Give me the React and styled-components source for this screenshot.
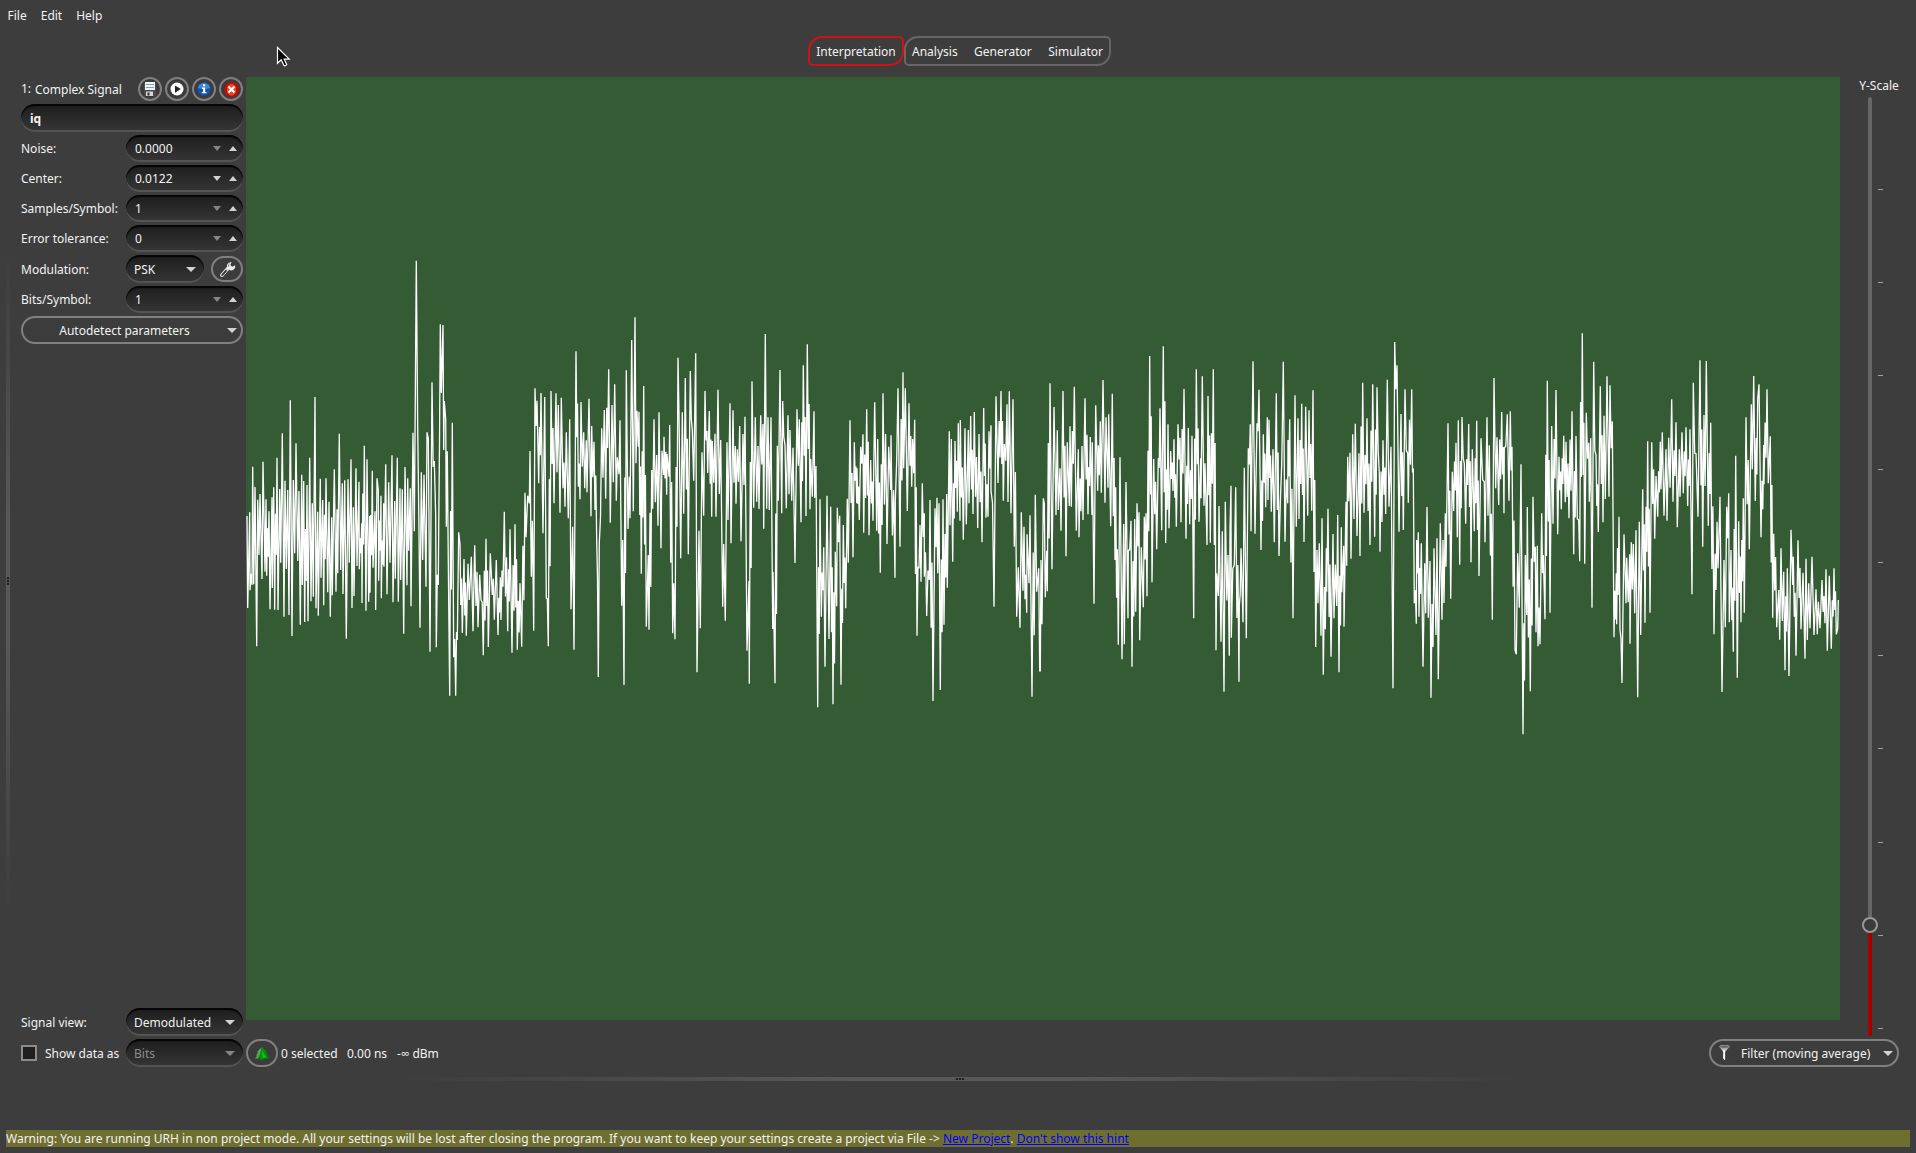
import React from "react";
import styled, { createGlobalStyle, css } from "styled-components";

/* ---------- signal data: each block lists local maxima and minima in 1/3 px units ---------- */

const BLOCKS = [
  {
    x: 240, y: 240,
    tops: "21 828 29 817 38 680 45 741 53 779 60 762 69 665 78 778 87 814 96 772 101 742 111 653 119 747 127 580 135 722 143 750 151 481 160 720 168 610 177 753 185 704 191 723 201 735 209 653 217 790 225 471 233 815 241 716 248 780 258 715 267 785 275 832 283 688 291 808 298 581 307 730 314 721 324 718 333 658 340 802 348 685 357 725 365 850 373 617 381 658 389 828 397 692 405 814 411 715 415 750 423 767 431 790 437 673 446 727 456 646 464 783 472 653 480 745 487 748 495 681 503 715 511 745 519 578 529 62 537 877 544 697 552 704 561 577 565 595 576 427 583 663 587 828 596 868 601 253 609 255 613 483 617 538 622 634 637 548 656 877 660 912 672 957 684 971 694 950 704 916 711 995 719 1004 738 896 751 940 769 960 781 1012 793 815 810 868 825 853 840 1030 855 758 863 767 870 633 885 445 891 482 903 459 914 471 933 453 948 460 955 495 964 473 979 577 989 538 998 860 1008 334 1023 486 1031 577 1039 601 1047 476 1055 558 1062 605 1078 910 1085 565 1093 510 1106 388 1116 495 1124 433 1132 652 1140 541 1148 900 1159 391 1168 710 1175 300 1185 232 1191 512 1197 515 1211 438 1225 945 1235 690 1242 538 1250 645 1257 517",
    bottoms: "23 1104 30 1051 36 1035 41 1033 50 1219 57 945 66 1017 75 995 80 1007 90 1108 97 1044 104 1109 114 1110 122 968 132 1130 139 987 147 1125 156 1188 164 940 173 963 181 1154 187 1035 194 1146 204 1144 213 1084 220 1070 228 1105 235 1127 243 1013 251 1096 263 1057 271 1130 277 1066 288 1055 293 1000 302 990 309 1062 319 1196 328 968 336 1104 342 1068 351 978 358 988 366 1089 378 1112 386 1085 390 1058 399 983 407 1110 416 1022 424 1075 432 980 441 1063 450 968 459 1087 466 1016 475 1085 482 1020 491 1181 501 1036 506 932 513 1099 523 874 540 1163 548 960 558 1040 570 1235 589 1222 595 1035 604 459 611 630 619 860 625 970 629 1367 641 1252 647 1367 652 1200 667 1179 679 1187 688 1080 699 1174 708 1098 714 1162 723 1080 730 1246 745 1221 757 1065 763 1139 774 1185 783 1140 789 1040 803 1174 816 1238 832 1229 845 1220 858 892 868 790 881 1172 896 730 909 880 919 1075 925 1219 942 790 951 697 960 818 969 745 975 800 985 835 993 1108 1002 1229 1015 740 1020 778 1027 680 1034 745 1041 757 1053 829 1070 900 1075 1311 1089 713 1097 776 1111 848 1120 727 1129 782 1137 703 1145 1097 1152 1335 1164 867 1170 835 1180 814 1188 670 1195 620 1204 1001 1219 1160 1227 1169 1238 806 1246 787 1254 857",
  },
  {
    x: 640, y: 290,
    tops: "66 482 72 440 81 492 89 405 101 880 114 203 117 370 127 367 136 264 151 243 157 420 167 190 177 722 186 487 195 303 201 423 208 363 217 453 225 431 234 299 242 450 251 762 261 457 270 340 279 361 286 468 292 478 299 408 309 432 315 380 327 873 336 274 346 382 354 468 362 376 369 402 376 132 384 382 393 382 399 846 412 467 420 240 428 333 435 465 444 376 450 420 459 473 471 358 478 388 490 226 502 163 512 507 522 364 528 528 540 628 551 772 561 617 572 650 586 785 592 653 599 677 610 705 622 626 630 391 643 457 651 535 662 470 669 433 680 358 692 510 704 337 713 447 729 310 746 470 753 436 766 635 774 295 789 247 796 295 807 340 818 447 824 389 834 830 840 705 847 580 853 670 870 630 885 655 891 623 897 640 909 628 920 612 928 424 934 447 945 453 955 400 961 390 975 415 985 420 992 378 1003 366 1017 432 1031 354 1047 424 1053 406 1068 319 1083 303 1093 462 1101 343 1108 304 1119 328 1135 832 1144 667 1152 710 1161 733 1170 676 1186 614 1196 835",
    bottoms: "63 775 71 555 80 614 87 560 98 1030 105 1048 122 805 131 671 145 793 161 572 171 1147 181 1015 191 677 203 549 215 680 228 680 238 612 248 950 256 992 264 690 273 760 282 578 288 641 303 754 312 585 321 1082 328 1181 341 653 350 635 357 657 371 716 380 656 388 660 398 1017 405 1180 415 632 425 670 439 655 447 613 455 632 465 819 475 527 483 697 498 678 510 658 517 620 524 624 533 1252 544 980 555 1130 567 1047 579 1243 590 949 603 1184 617 955 625 818 639 802 650 640 658 690 671 728 687 736 699 692 710 722 721 848 741 762 752 600 765 863 780 770 791 535 802 663 815 590 821 550 831 1037 843 875 853 860 860 978 868 870 879 1233 893 850 901 1200 912 1004 922 893 930 706 938 815 952 665 960 692 970 749 979 703 987 640 999 672 1013 714 1026 757 1038 683 1044 680 1053 603 1062 950 1074 579 1090 632 1104 636 1113 670 1130 980 1140 1013 1149 902 1155 928 1160 968 1167 880 1176 1220 1190 905 1199 1143",
  },
  {
    x: 1040, y: 320,
    tops: "3 720 10 535 13 550 20 692 30 190 42 261 52 331 60 445 69 213 82 367 90 319 103 200 115 388 126 378 135 235 151 351 157 367 167 256 175 376 181 304 189 180 198 292 206 283 217 221 227 502 240 412 251 612 258 486 265 690 273 602 284 597 291 550 297 577 304 682 313 590 318 580 329 108 341 417 355 415 360 265 370 79 384 313 392 393 402 358 414 313 420 353 432 207 445 324 456 347 469 148 482 415 487 169 495 430 504 228 520 148 530 760 537 558 547 634 556 545 570 628 573 497 587 502 598 858 603 685 613 443 625 385 631 313 639 124 651 310 657 209 670 343 682 292 687 299 699 388 709 220 721 550 730 125 744 360 749 298 765 226 774 295 785 251 797 260 807 271 819 211 831 690 838 670 846 595 859 685 864 566 879 642 893 585 904 622 911 677 918 545 923 410 930 398 938 343 946 311 957 400 968 188 981 295 998 193 1011 202 1018 458 1029 361 1042 179 1053 380 1064 66 1071 136 1083 282 1095 208 1103 400 1115 208 1120 445 1130 660 1135 637 1144 670 1154 730 1161 561 1170 723 1182 685 1191 655",
    bottoms: "1 1053 6 913 16 832 22 814 36 748 48 585 55 570 63 632 78 709 88 558 94 560 109 632 117 652 129 600 144 583 156 585 162 851 173 512 184 518 195 548 204 503 212 619 225 720 235 974 246 1018 253 973 264 895 276 1040 287 875 299 961 310 862 321 829 336 787 350 688 365 631 377 669 387 625 399 513 409 620 423 607 438 656 449 613 461 895 477 605 483 535 492 557 501 675 511 668 528 991 535 828 543 965 552 1115 568 1007 574 953 583 735 597 1085 609 907 619 955 633 634 645 641 663 690 677 562 684 540 694 575 703 667 717 708 735 665 743 550 759 895 769 620 777 597 792 666 803 587 815 572 827 981 834 850 843 947 850 1064 860 815 873 1010 882 895 890 858 897 1057 905 817 912 920 920 737 933 716 942 597 951 648 960 708 972 578 990 675 1004 650 1020 695 1037 582 1047 560 1059 1105 1077 635 1090 630 1105 548 1123 850 1129 911 1137 890 1149 1040 1157 880 1165 893 1173 1133 1188 945 1195 1078",
  },
  {
    x: 1440, y: 320,
    tops: "1 610 9 660 16 580 24 310 37 455 48 368 55 301 66 291 73 430 86 312 97 388 110 302 123 355 133 485 141 292 148 376 162 174 171 352 185 276 193 385 202 283 211 274 216 380 233 700 243 433 256 705 262 561 279 530 286 680 292 677 305 580 310 705 322 182 335 318 348 210 357 410 371 347 378 365 396 274 408 348 416 600 427 40 439 278 446 368 452 355 461 125 468 405 481 199 492 287 501 169 510 196 517 304 529 760 537 590 552 643 560 713 569 703 574 667 580 672 588 631 598 605 608 508 623 364 635 367 648 468 661 365 667 337 678 388 695 238 708 307 718 388 726 337 738 322 750 328 760 188 768 400 780 121 799 123 812 308 831 605 840 530 852 720 860 560 866 520 873 690 887 407 896 604 910 535 918 292 934 253 941 168 953 238 957 193 971 375 981 208 991 349 1001 641 1016 810 1023 685 1031 755 1042 745 1053 629 1060 710 1074 661 1089 758 1098 716 1106 790 1116 710 1128 808 1135 845 1146 780 1158 748 1168 767 1182 745 1195 840",
    bottoms: "6 899 12 849 18 740 32 836 41 573 52 652 59 734 77 611 93 727 103 634 117 768 135 667 144 587 157 899 167 505 176 555 192 580 207 542 225 990 229 1003 238 863 249 1243 260 885 271 1114 288 937 294 979 300 973 315 898 330 878 339 611 353 643 364 568 376 547 387 595 401 703 419 724 434 731 448 545 456 863 475 636 489 607 496 537 507 530 522 952 530 913 540 930 546 1089 558 850 570 971 584 880 593 1132 602 945 615 908 630 878 644 656 653 590 663 508 672 587 681 602 699 545 712 622 720 530 730 520 743 558 756 823 774 590 788 680 805 617 822 943 834 745 846 1116 856 922 868 907 880 995 892 1073 903 907 913 878 928 688 937 448 946 543 963 652 972 493 985 490 998 893 1010 922 1019 959 1027 903 1035 1051 1047 1068 1058 795 1068 1007 1083 928 1095 1016 1102 960 1110 925 1122 945 1132 943 1140 925 1155 910 1162 992 1174 986 1189 943 1193 925",
  },
];

function readPairs(text, block, kind) {
  const n = text.split(" ").map(Number);
  const out = [];
  for (let i = 0; i < n.length; i += 2) {
    out.push({ x: block.x + n[i] / 3, y: block.y + n[i + 1] / 3, kind });
  }
  return out;
}

function buildTrace() {
  let seed = 7;
  const rnd = () => {
    seed = (seed * 16807) % 2147483647;
    return seed / 2147483647;
  };
  const pts = BLOCKS.flatMap((b) => [
    ...readPairs(b.tops, b, 1),
    ...readPairs(b.bottoms, b, -1),
  ]).sort((a, b) => a.x - b.x);
  const out = [];
  pts.forEach((p, i) => {
    out.push([p.x, p.y]);
    const q = pts[i + 1];
    if (!q) return;
    const gap = q.x - p.x;
    const dy = q.y - p.y;
    if (p.kind === q.kind) {
      if (gap > 1.4) out.push([p.x + gap / 2, (p.y + q.y) / 2 + p.kind * (14 + 34 * rnd())]);
    } else if (gap > 2.1) {
      out.push([p.x + gap * 0.36, p.y + dy * (0.6 + 0.15 * rnd())]);
      out.push([p.x + gap * 0.66, p.y + dy * (0.25 + 0.15 * rnd())]);
    }
  });
  return "M" + out.map(([x, y]) => `${x.toFixed(1)} ${y.toFixed(1)}`).join("L");
}

const TRACE = buildTrace();

/* ---------- styles ---------- */

const GlobalStyle = createGlobalStyle`
  *, *::before, *::after { box-sizing: border-box; }
  body {
    margin: 0;
    background: #3d3d3d;
    color: #f2f2f2;
    font-family: "Noto Sans", "Open Sans", sans-serif;
    font-size: 12px;
    line-height: 17px;
    overflow: hidden;
  }
`;

const Window = styled.div`
  display: flex;
  flex-direction: column;
  height: 1153px;
  width: 1916px;
  white-space: nowrap;
`;

const MenuBar = styled.nav`
  display: flex;
  gap: 14px;
  height: 36px;
  padding: 7px 7.5px 0;
`;

const TabBar = styled.div`
  display: flex;
  height: 41px;
  padding-left: 808px;
`;

const tabShape = css`
  height: 30px;
  border: 2px solid ${(p) => (p.$active ? "#d01216" : "#666")};
  border-radius: 14px 5px 14px 5px;
`;

const ActiveTab = styled.div`
  ${tabShape}
  width: 96px;
  padding-top: 5px;
  text-align: center;
`;

const TabGroup = styled.div`
  ${tabShape}
  display: flex;
  justify-content: space-between;
  width: 207px;
  padding: 5px 6px 0;
`;

const Workspace = styled.main`
  display: flex;
  height: 959px;
`;

const SideSplitter = styled.div`
  display: flex;
  flex-direction: column;
  align-items: center;
  justify-content: center;
  gap: 1px;
  width: 4px;
  height: 660px;
  margin: 174px 11px 0 6px;
  background: linear-gradient(#3d3d3d, #585858 40%, #585858 60%, #3d3d3d);
`;

const BottomSplitter = styled.div`
  display: flex;
  align-items: center;
  justify-content: center;
  gap: 1px;
  width: 1120px;
  height: 4px;
  margin: 10px 0 0 400px;
  background: linear-gradient(90deg, #3d3d3d, #585858 40%, #585858 60%, #3d3d3d);
`;

const Grip = styled.i`
  width: 2px;
  height: 2px;
  background: #1c1c1c;
`;

const Panel = styled.aside`
  display: flex;
  flex-direction: column;
  gap: 3px;
  width: 225px;
  padding-right: 3px;
`;

const TitleRow = styled.div`
  display: flex;
  align-items: center;
  gap: 3px;
  height: 24px;
`;

const SignalIndex = styled.span`
  width: 11px;
  margin-top: -2px;
`;

const SignalName = styled.span`
  flex: 1;
`;

const RoundButton = styled.button`
  display: flex;
  align-items: center;
  justify-content: center;
  width: 24px;
  height: 24px;
  padding: 0;
  border: 2px solid #808080;
  border-radius: 50%;
  background: #3b3b3b;
`;

const FormRow = styled.label`
  display: flex;
  align-items: center;
  height: ${(p) => p.$height || 27}px;
`;

const FieldLabel = styled.span`
  width: 105px;
`;

const Inset = styled.div`
  display: flex;
  align-items: center;
  flex: ${(p) => (p.$width ? "none" : 1)};
  width: ${(p) => (p.$width ? `${p.$width}px` : "auto")};
  height: ${(p) => p.$height || 27}px;
  padding: 0 ${(p) => p.$end || 7}px 0 ${(p) => p.$indent || 9}px;
  border-radius: 14px;
  background: linear-gradient(#1d1d1d, #363636);
  box-shadow: inset 0 2px 1px #050505, inset 0 -2px 0 #545454;
  color: ${(p) => (p.$disabled ? "#8b8b8b" : "#f2f2f2")};
  font-weight: ${(p) => (p.$bold ? 700 : 400)};
`;

const FieldValue = styled.span`
  flex: 1;
`;

const Arrow = styled.i`
  width: 0;
  height: 0;
  margin-right: ${(p) => p.$gap || 0}px;
  border-left: ${(p) => p.$size || 4}px solid transparent;
  border-right: ${(p) => p.$size || 4}px solid transparent;
  ${(p) =>
    p.$up
      ? css`border-bottom: 5px solid #d2d2d2;`
      : css`border-top: 5px solid ${p.$dim ? "#858585" : "#d2d2d2"};`}
`;

const PillButton = styled.button`
  display: flex;
  align-items: center;
  justify-content: ${(p) => (p.$center ? "center" : "flex-start")};
  width: ${(p) => p.$width}px;
  height: ${(p) => p.$height || 28}px;
  margin-left: ${(p) => p.$push || 0}px;
  padding: 0;
  border: 2px solid #808080;
  border-radius: 14px;
  background: #3c3c3c;
  color: inherit;
  font: inherit;
`;

const PillLabel = styled.span`
  display: ${(p) => (p.$icon ? "flex" : "block")};
  flex: ${(p) => (p.$fill ? 1 : "none")};
  margin-left: ${(p) => p.$left || 0}px;
  text-align: ${(p) => (p.$fill ? "center" : "left")};
`;

const Spacer = styled.div`
  flex: 1;
`;

const Plot = styled.svg`
  display: block;
  flex: none;
  width: 1594px;
  height: 943px;
  background: #355b35;
`;

const ScaleColumn = styled.div`
  display: flex;
  flex-direction: column;
  align-items: center;
  width: 60px;
  margin-left: 9px;
`;

const ScaleLabel = styled.span`
  height: 20px;
`;

const ScaleBody = styled.div`
  display: flex;
  align-self: flex-start;
  margin-left: 13px;
`;

const Groove = styled.div`
  display: flex;
  flex-direction: column;
  align-items: center;
  width: 16px;
`;

const GroovePart = styled.div`
  width: 4px;
  height: ${(p) => p.$height}px;
  border-radius: ${(p) => (p.$lower ? "0 0 2px 2px" : "2px 2px 0 0")};
  background: ${(p) => (p.$lower ? "linear-gradient(90deg, #b40000, #9a0000)" : "#666")};
`;

const Knob = styled.div`
  width: 16px;
  height: 16px;
  border: 2px solid #999;
  border-radius: 50%;
  background: #3b3b3b;
`;

const Ticks = styled.div`
  display: flex;
  flex-direction: column;
  justify-content: space-between;
  height: 840px;
  margin-top: 92px;
`;

const Tick = styled.i`
  width: 5px;
  height: 1px;
  background: #a0a0a0;
`;

const StatusRow = styled.div`
  display: flex;
  align-items: center;
  height: 28px;
  margin: 3px 17px 0 21px;
`;

const CheckBox = styled.span`
  width: 16px;
  height: 16px;
  margin-right: 8px;
  border: 2px solid #8c8c8c;
  background: #202020;
`;

const CheckLabel = styled.span`
  width: 81px;
`;

const StatusText = styled.span`
  width: ${(p) => p.$width}px;
  margin-left: ${(p) => p.$left || 0}px;
`;

const Warning = styled.footer`
  width: 1904px;
  height: 17px;
  margin: 49px 0 0 6px;
  background: #6e6e2f;
  line-height: 17px;
`;

const HintLink = styled.a`
  color: #0000ff;
  text-decoration: underline;
`;

const Pointer = styled.svg`
  position: absolute;
  left: 276px;
  top: 46px;
`;

/* ---------- icons ---------- */

const SaveIcon = () => (
  <svg width="12" height="14" viewBox="0 0 12 14">
    <path d="M0 1h12v13H1l-1-1z" fill="#4b4b4b" />
    <rect x="1" y="0" width="10" height="8" fill="#f4f4f4" />
    <path d="M2 2.5h8M2 5.5h8" stroke="#7c9cc4" />
    <rect x="2" y="9.5" width="7" height="4.5" fill="#d8d8d8" />
    <rect x="3.5" y="10.5" width="2" height="3" fill="#333" />
  </svg>
);

const PlayIcon = () => (
  <svg width="14" height="14" viewBox="0 0 14 14">
    <circle cx="7" cy="7" r="6.5" fill="#fff" />
    <path d="M5 3.4v7.4L10.8 7z" fill="#222" />
  </svg>
);

const InfoIcon = () => (
  <svg width="14" height="14" viewBox="0 0 14 14">
    <circle cx="7" cy="7" r="6.8" fill="#0d56b5" />
    <path d="M.8 6a6.3 5.8 0 0 1 12.4 0q-6 2-12.4 0" fill="#4384ce" />
    <path d="M6 2.2h2.2v2H6zM5 5.5h3.2v4.4h1.3v1.4H4.8V9.9h1.3V6.9H5z" fill="#fff" />
  </svg>
);

const CloseIcon = () => (
  <svg width="15" height="15" viewBox="0 0 14 14">
    <circle cx="7" cy="7" r="6.9" fill="#c80a06" />
    <path d="M2.8 6a4.2 4.2 0 0 1 8.4 0v2.5a4.2 4 0 0 1-8.4 0z" fill="#dc4a26" />
    <path d="M4.2 4.2l5.6 5.6M9.8 4.2l-5.600 5.600" stroke="#fff" strokeWidth="2" />
  </svg>
);

const WrenchIcon = () => (
  <svg width="17" height="17" viewBox="0 0 17 17">
    <path d="M2.8 14.2L9.5 6.8" stroke="#d9d9d9" strokeWidth="3.6" strokeLinecap="round" />
    <path d="M3.2 14L7 9.8" stroke="#303030" strokeWidth="1.8" strokeLinecap="round" />
    <path d="M8.2 7.2Q6.9 3 10.5 1.6L12.6.9l-1.3 3 1.9 1.8 3-1.4q.5 2.8-1.5 4.3-2.3 1.5-4.5.4z" fill="#ededed" />
    <path d="M9.5 5.8Q9 3.3 10.7 2.6" fill="none" stroke="#888" />
  </svg>
);

const TreeIcon = () => (
  <svg width="14" height="13" viewBox="0 0 14 13">
    <path d="M7 0L1.800 5.200H3.500L.8 8.600H2.200L0 11.500H5.600V13H8.400V11.500H14L11.800 8.600H13.200L10.500 5.200H12.200z" fill="#078f07" />
    <path d="M6.500.5L1.800 5.200H3.700L1 8.600H2.400L.2 11.500H2.800L5 7z" fill="#5fa45f" />
    <path d="M7.300 3.500v7.300h4.200L9.800 8z" fill="#0cc80c" />
  </svg>
);

const FunnelIcon = () => (
  <svg width="11" height="16" viewBox="0 0 11 16">
    <path d="M.5 1.5L4.2 7v6l2 2.2V7l4.3-5.500z" fill="#bdbdbd" />
    <path d="M4.2 5v8.500l1.800 1.700V5z" fill="#f4f4f4" />
    <ellipse cx="5.5" cy="1.7" rx="5" ry="1.5" fill="#606060" stroke="#aaa" strokeWidth=".8" />
  </svg>
);

/* ---------- composed controls ---------- */

const SpinRow = ({ label, value, dim = true }) => (
  <FormRow>
    <FieldLabel>{label}</FieldLabel>
    <Inset $end={6.5}>
      <FieldValue>{value}</FieldValue>
      <Arrow $dim={dim} $gap={8} />
      <Arrow $up />
    </Inset>
  </FormRow>
);

const Combo = ({ value, width, disabled }) => (
  <Inset $width={width} $height={28} $indent={8} $disabled={disabled}>
    <FieldValue>{value}</FieldValue>
    <Arrow $size={5} $dim={disabled} $gap={1} />
  </Inset>
);

export default function App() {
  return (
    <Window>
      <GlobalStyle />
      <MenuBar>
        <span>File</span>
        <span>Edit</span>
        <span>Help</span>
      </MenuBar>
      <TabBar>
        <ActiveTab $active>Interpretation</ActiveTab>
        <TabGroup>
          <span>Analysis</span>
          <span>Generator</span>
          <span>Simulator</span>
        </TabGroup>
      </TabBar>

      <Workspace>
        <SideSplitter>
          <Grip />
          <Grip />
          <Grip />
        </SideSplitter>
        <Panel>
          <TitleRow>
            <SignalIndex>1:</SignalIndex>
            <SignalName>Complex Signal</SignalName>
            <RoundButton><SaveIcon /></RoundButton>
            <RoundButton><PlayIcon /></RoundButton>
            <RoundButton><InfoIcon /></RoundButton>
            <RoundButton><CloseIcon /></RoundButton>
          </TitleRow>
          <FormRow $height={28}>
            <Inset $height={28} $bold><FieldValue>iq</FieldValue></Inset>
          </FormRow>
          <SpinRow label="Noise:" value="0.0000" />
          <SpinRow label="Center:" value="0.0122" dim={false} />
          <SpinRow label="Samples/Symbol:" value="1" />
          <SpinRow label="Error tolerance:" value="0" />
          <FormRow $height={28}>
            <FieldLabel>Modulation:</FieldLabel>
            <Combo value="PSK" width={78} />
            <PillButton $width={32} $height={26} $push={7} $center><WrenchIcon /></PillButton>
          </FormRow>
          <SpinRow label="Bits/Symbol:" value="1" />
          <PillButton $width={222}>
            <PillLabel $fill $left={-1}>Autodetect parameters</PillLabel>
            <Arrow $size={5} $gap={4} />
          </PillButton>
          <Spacer />
          <FormRow $height={28}>
            <FieldLabel>Signal view:</FieldLabel>
            <Combo value="Demodulated" />
          </FormRow>
        </Panel>
        <Plot viewBox="246 77 1594 943">
          <path d={TRACE} fill="none" stroke="#fff" strokeWidth="1.3" strokeLinejoin="bevel" />
        </Plot>
        <ScaleColumn>
          <ScaleLabel>Y-Scale</ScaleLabel>
          <ScaleBody>
            <Groove>
              <GroovePart $height={820} />
              <Knob />
              <GroovePart $height={103} $lower />
            </Groove>
            <Ticks>
              {Array.from({ length: 10 }, (_, i) => <Tick key={i} />)}
            </Ticks>
          </ScaleBody>
        </ScaleColumn>
      </Workspace>

      <StatusRow>
        <CheckBox />
        <CheckLabel>Show data as</CheckLabel>
        <Combo value="Bits" width={117} disabled />
        <PillButton $width={32} $push={3} $center><TreeIcon /></PillButton>
        <StatusText $left={3} $width={66}>0 selected</StatusText>
        <StatusText $width={50}>0.00 ns</StatusText>
        <StatusText $width={60}>-∞ dBm</StatusText>
        <Spacer />
        <PillButton $width={190}>
          <PillLabel $icon $left={8}><FunnelIcon /></PillLabel>
          <PillLabel $left={11}>Filter (moving average)</PillLabel>
          <Spacer />
          <Arrow $size={5} $gap={4} />
        </PillButton>
      </StatusRow>

      <BottomSplitter>
        <Grip />
        <Grip />
        <Grip />
      </BottomSplitter>

      <Warning>
        Warning: You are running URH in non project mode. All your settings will be lost after closing the program. If
        you want to keep your settings create a project via File -&gt; <HintLink>New Project</HintLink>.{" "}
        <HintLink>Don't show this hint</HintLink>
      </Warning>

      <Pointer width="16" height="24" viewBox="0 0 16 24">
        <path
          d="M1.5 1.5v15.800l3.700-3.500 2.700 5.500q1.500 1.300 2.800-.8l-2.500-5.300h5z"
          fill="#000"
          stroke="#fff"
          strokeWidth="1.2"
        />
      </Pointer>
    </Window>
  );
}
